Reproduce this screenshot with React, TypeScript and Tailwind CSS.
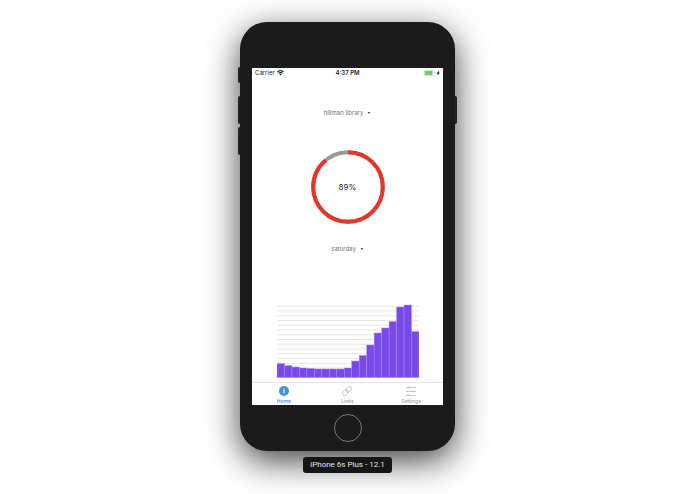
import { useState } from "react";
import clsx from "clsx";

type DropdownProps = {
  label: string;
  value: string;
  options: string[];
  onChange: (value: string) => void;
};

const libraries = ["hillman library", "benedum library"];

const days = [
  "sunday",
  "monday",
  "tuesday",
  "wednesday",
  "thursday",
  "friday",
  "saturday",
];

// occupancy per hour, in chart units
const hours = [
  14, 12, 10.5, 9.5, 9, 8.5, 8.5, 8.5, 8.5, 9.5, 16.5, 22, 32.5, 44.5, 49.5, 56,
  70.5, 72.5, 46,
];

const tabs = ["Home", "Links", "Settings"];

function Dropdown({ label, value, options, onChange }: DropdownProps) {
  return (
    <label className="flex items-center gap-1 text-[#707070]">
      <select
        aria-label={label}
        className="field-sizing-content appearance-none bg-transparent text-[6px] leading-[10px] outline-none"
        value={value}
        onChange={(event) => onChange(event.target.value)}
      >
        {options.map((option) => (
          <option key={option} value={option}>
            {option}
          </option>
        ))}
      </select>
      <svg className="h-[2px] w-[4px]" viewBox="0 0 4 2" fill="#555555">
        <path d="M0.5 0h3L2 2z" />
      </svg>
    </label>
  );
}

function StatusBar() {
  return (
    <div className="grid h-[10px] grid-cols-3 items-center px-[3px] text-[6px] leading-[8px] text-[#222222]">
      <div className="flex items-center gap-[2px]">
        <span>Carrier</span>
        <svg className="h-[6px] w-[7px]" viewBox="0 0 14 11" fill="#111111">
          <path d="M7 0C4.300 0 1.900 1 0 2.800l1.400 1.500C2.900 2.900 4.900 2.100 7 2.100s4.100.8 5.600 2.200L14 2.800C12.100 1 9.700 0 7 0z" />
          <path d="M7 3.500c-1.700 0-3.300.7-4.500 1.800l1.500 1.600c.8-.7 1.900-1.200 3-1.200s2.200.5 3 1.200l1.500-1.600C10.300 4.200 8.700 3.500 7 3.500z" />
          <path d="M7 7.100c-.8 0-1.500.3-2 .8L7 10.500l2-2.600c-.5-.5-1.200-.8-2-.8z" />
        </svg>
      </div>
      <span className="text-center font-semibold">4:37 PM</span>
      <svg className="h-[6px] w-[16px] justify-self-end" viewBox="0 0 16 6">
        <rect
          x="0.3"
          y="0.4"
          width="10"
          height="5.200"
          rx="1"
          fill="#ffffff"
          stroke="#b5b5b5"
          strokeWidth="0.5"
        />
        <rect x="0.8" y="0.9" width="7.700" height="4.200" rx="0.5" fill="#6fcf6b" />
        <path d="M10.900 2v2c.6-.2.8-.6.8-1s-.2-.8-.8-1z" fill="#b5b5b5" />
        <path d="M15 0.400l-2.400 3h1.200l-.4 2.400 2.400-3.100h-1.200z" fill="#111111" />
      </svg>
    </div>
  );
}

function Gauge({ percent }: { percent: number }) {
  return (
    <div className="grid size-[74px] place-items-center">
      <svg
        className="col-start-1 row-start-1 size-full -rotate-90"
        viewBox="0 0 74 74"
        fill="none"
        strokeWidth="4"
      >
        <circle cx="37" cy="37" r="34.800" stroke="#999999" />
        <circle
          cx="37"
          cy="37"
          r="34.800"
          stroke="#e5362b"
          pathLength="100"
          strokeDasharray={`${percent} 100`}
        />
      </svg>
      <span className="col-start-1 row-start-1 text-[8px] leading-[10px] text-[#222222]">
        {percent}%
      </span>
    </div>
  );
}

function HoursChart() {
  const step = 142 / hours.length;

  return (
    <svg className="h-[74px] w-[142px]" viewBox="0 0 142 74">
      {Array.from({ length: 16 }, (_, i) => (
        <line
          key={i}
          x1="0"
          x2="142"
          y1={73.5 - i * 4.75}
          y2={73.5 - i * 4.75}
          stroke="#dedede"
          strokeWidth="0.8"
        />
      ))}
      {hours.map((value, i) => (
        <rect
          key={i}
          x={i * step}
          y={73.5 - value}
          width={step}
          height={value}
          fill="#7a49ea"
          stroke="#a98cf2"
          strokeWidth="0.5"
        />
      ))}
    </svg>
  );
}

function TabIcon({ name }: { name: string }) {
  if (name === "Home") {
    return (
      <svg className="size-[10px]" viewBox="0 0 20 20">
        <circle cx="10" cy="10" r="10" fill="#4a90d9" />
        <circle cx="10" cy="5.800" r="1.400" fill="#ffffff" />
        <path d="M8.400 8.500h2.800v6h-2.400v-4.800h-.4z" fill="#ffffff" />
      </svg>
    );
  }
  if (name === "Links") {
    return (
      <svg
        className="size-[10px]"
        viewBox="0 0 24 24"
        fill="none"
        stroke="#bcbcbc"
        strokeWidth="2"
      >
        <rect x="8.500" y="3" width="15" height="10" rx="5" transform="rotate(-45 16 8)" />
        <rect x="0.500" y="11" width="15" height="10" rx="5" transform="rotate(-45 8 16)" />
      </svg>
    );
  }
  return (
    <svg
      className="size-[10px]"
      viewBox="0 0 20 20"
      fill="none"
      stroke="#bcbcbc"
      strokeWidth="1.800"
    >
      <path d="M0 3h20M0 11h20M0 19h20" />
      <path d="M6 1v4M14 9v4M6 17v3" strokeWidth="2.500" />
    </svg>
  );
}

export default function App() {
  const [library, setLibrary] = useState("hillman library");
  const [day, setDay] = useState("saturday");
  const [activeTab, setActiveTab] = useState("Home");

  return (
    <main className="flex min-h-screen flex-col items-center bg-white pt-[22px] font-['Inter','Liberation_Sans',sans-serif]">
      <div className="relative rounded-[27px] bg-[#1b1b1b] px-3 pt-[46px] pb-[9px] shadow-[0_10px_34px_rgba(0,0,0,0.75)]">
        {/* side buttons */}
        <span className="absolute top-[45px] -left-[2px] h-4 w-[2px] rounded-l-xs bg-[#222222]" />
        <span className="absolute top-[74px] -left-[2px] h-[28px] w-[2px] rounded-l-xs bg-[#222222]" />
        <span className="absolute top-[105px] -left-[2px] h-[28px] w-[2px] rounded-l-xs bg-[#222222]" />
        <span className="absolute top-[74px] -right-[2px] h-[28px] w-[2px] rounded-r-xs bg-[#222222]" />

        <div className="flex w-[191px] flex-col bg-white">
          <StatusBar />
          <div className="flex flex-col items-center pt-[30px] pb-1">
            <Dropdown
              label="Library"
              value={library}
              options={libraries}
              onChange={setLibrary}
            />
            <div className="pt-8 pb-5">
              <Gauge percent={89} />
            </div>
            <Dropdown
              label="Day"
              value={day}
              options={days}
              onChange={setDay}
            />
            <div className="pt-[50px]">
              <HoursChart />
            </div>
          </div>
          <nav className="grid grid-cols-3 border-t border-[#e6e6e6] pt-[3px]">
            {tabs.map((tab) => (
              <button
                key={tab}
                type="button"
                onClick={() => setActiveTab(tab)}
                className={clsx(
                  "flex flex-col items-center gap-[2px] text-[5px] leading-[7px] font-medium",
                  activeTab === tab ? "text-[#3b82f6]" : "text-[#a3a3a3]"
                )}
              >
                <TabIcon name={tab} />
                {tab}
              </button>
            ))}
          </nav>
        </div>

        <button
          type="button"
          aria-label="Home button"
          className="mx-auto mt-[9px] block size-[28px] rounded-full border border-[#777777]"
        />
      </div>

      <p className="relative mt-[6px] rounded-[3px] bg-[#161616] px-[7px] py-[3px] font-['Roboto','Liberation_Sans',sans-serif] text-[8px] leading-[10px] text-[#e5e5e5]">
        iPhone 6s Plus - 12.1
      </p>
    </main>
  );
}
